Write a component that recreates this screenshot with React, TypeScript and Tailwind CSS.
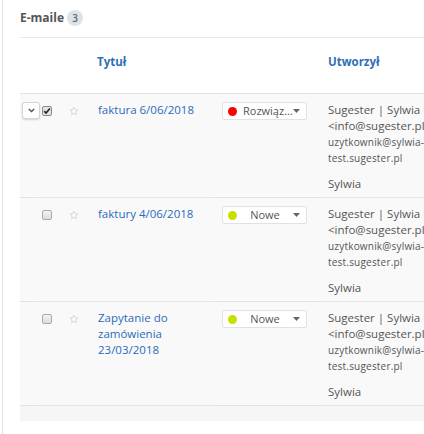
import React from "react";

const Star = () => (
  <svg width="10" height="10" viewBox="0 0 24 24" className="block">
    <path
      d="M12 2.5l2.9 6.2 6.8.8-5 4.7 1.3 6.7L12 17.6l-6 3.3 1.3-6.7-5-4.7 6.8-.8z"
      fill="none"
      stroke="#c8c8c8"
      strokeWidth="1.6"
      strokeLinejoin="round"
    />
  </svg>
);

const Checkbox = ({ checked }: { checked?: boolean }) => (
  <div
    className={
      "w-[10px] h-[10px] rounded-[2px] border flex items-center justify-center " +
      (checked ? "border-[#8a8a8a] bg-[#e4e4e4]" : "border-[#a9a9a9] bg-gradient-to-b from-[#f4f4f4] to-[#dcdcdc]")
    }
  >
    {checked && (
      <svg width="8" height="8" viewBox="0 0 10 10">
        <path d="M1.5 5.2l2.3 2.4L8.6 2" fill="none" stroke="#222" strokeWidth="2" />
      </svg>
    )}
  </div>
);

const Caret = () => (
  <svg width="7" height="4" viewBox="0 0 7 4" className="block">
    <path d="M0 0h7L3.5 4z" fill="#666" />
  </svg>
);

type Row = {
  title: React.ReactNode;
  status: string;
  dot: string;
  checked?: boolean;
  menu?: boolean;
};

const rows: Row[] = [
  { title: "faktura 6/06/2018", status: "Rozwiąz...", dot: "#ff0000", checked: true, menu: true },
  { title: "faktury 4/06/2018", status: "Nowe", dot: "#c6e000" },
  {
    title: (
      <>
        Zapytanie do
        <br />
        zamówienia
        <br />
        23/03/2018
      </>
    ),
    status: "Nowe",
    dot: "#c6e000",
  },
];

export default function App() {
  return (
    <div
      className="relative w-[424px] h-[434px] overflow-hidden bg-white text-[#555]"
      style={{ fontFamily: '"Open Sans", "Noto Sans", sans-serif' }}
    >
      <div className="absolute left-[2px] top-0 bottom-0 w-px bg-[#e2e2e2]" />
      <div className="pl-[20px]">
        <div className="h-[38px] border-b border-[#e8e8e8] flex items-start pt-[10px]">
          <span className="text-[12px] leading-[16px] font-bold text-[#555]">E-maile</span>
          <span className="ml-[3px] w-[16px] h-[16px] rounded-full bg-[#dce3e9] text-[10px] leading-[16px] text-center text-[#666] font-semibold">
            3
          </span>
        </div>
        <div className="h-[56px] border-b border-[#e3e3e3] flex pt-[16px] text-[11.5px] leading-[16px] font-bold text-[#2f6fba]">
          <div className="w-[77px]" />
          <div className="w-[231px]">Tytuł</div>
          <div>Utworzył</div>
        </div>
        <div className="bg-[#f9f9f9] w-[600px]">
          {rows.map((r, i) => (
            <div key={i} className="flex h-[104px]">
              <div className="relative w-[15px] border-b border-[#dbe3ec]">
                {r.menu && (
                  <div className="absolute left-[2px] top-[8px] w-[18px] h-[17px] bg-white border border-[#d4d4d4] rounded-[3px] shadow-[0_1px_2px_rgba(0,0,0,0.15)] flex items-center justify-center">
                    <svg width="7" height="5" viewBox="0 0 7 5">
                      <path d="M0.8 1l2.7 2.6L6.2 1" fill="none" stroke="#555" strokeWidth="1.4" />
                    </svg>
                  </div>
                )}
              </div>
              <div className="w-[180px] border-b border-[#e6e6e6] flex items-start pt-[8px] pl-[7px]">
                <div className="mt-[4px]">
                  <Checkbox checked={r.checked} />
                </div>
                <div className="mt-[4px] ml-[17px]">
                  <Star />
                </div>
                <div className="ml-[19px] text-[11.5px] leading-[16px] text-[#2a6bb9]">{r.title}</div>
              </div>
              <div className="w-[105px] border-b border-[#dbe3ec] pt-[8px] pl-[7px]">
                <div className="w-[85px] h-[18px] bg-white border border-[#e2e2e2] rounded-[2px] flex items-center pl-[5px] pr-[6px]">
                  <span className="w-[9px] h-[9px] rounded-full shrink-0" style={{ backgroundColor: r.dot }} />
                  <span
                    className={
                      "flex-1 text-[11px] leading-[16px] text-[#555] whitespace-nowrap " +
                      (r.status === "Nowe" ? "text-center" : "pl-[6px]")
                    }
                  >
                    {r.status}
                  </span>
                  <Caret />
                </div>
              </div>
              <div className="flex-1 border-b border-[#e6e6e6] pt-[8px] pl-[8px] text-[#555] whitespace-nowrap">
                <div className="text-[11.5px] leading-[16px]">Sugester | Sylwia</div>
                <div className="text-[11.5px] leading-[16px]">&lt;info@sugester.pl&gt;</div>
                <div className="text-[10px] leading-[16px] tracking-[0.2px]">uzytkownik@sylwia-</div>
                <div className="text-[10px] leading-[16px] tracking-[0.2px]">test.sugester.pl</div>
                <div className="mt-[10px] text-[11.5px] leading-[16px]">Sylwia</div>
              </div>
            </div>
          ))}
          <div className="h-[15px] bg-[#f6f6f7]" />
        </div>
      </div>
    </div>
  );
}
